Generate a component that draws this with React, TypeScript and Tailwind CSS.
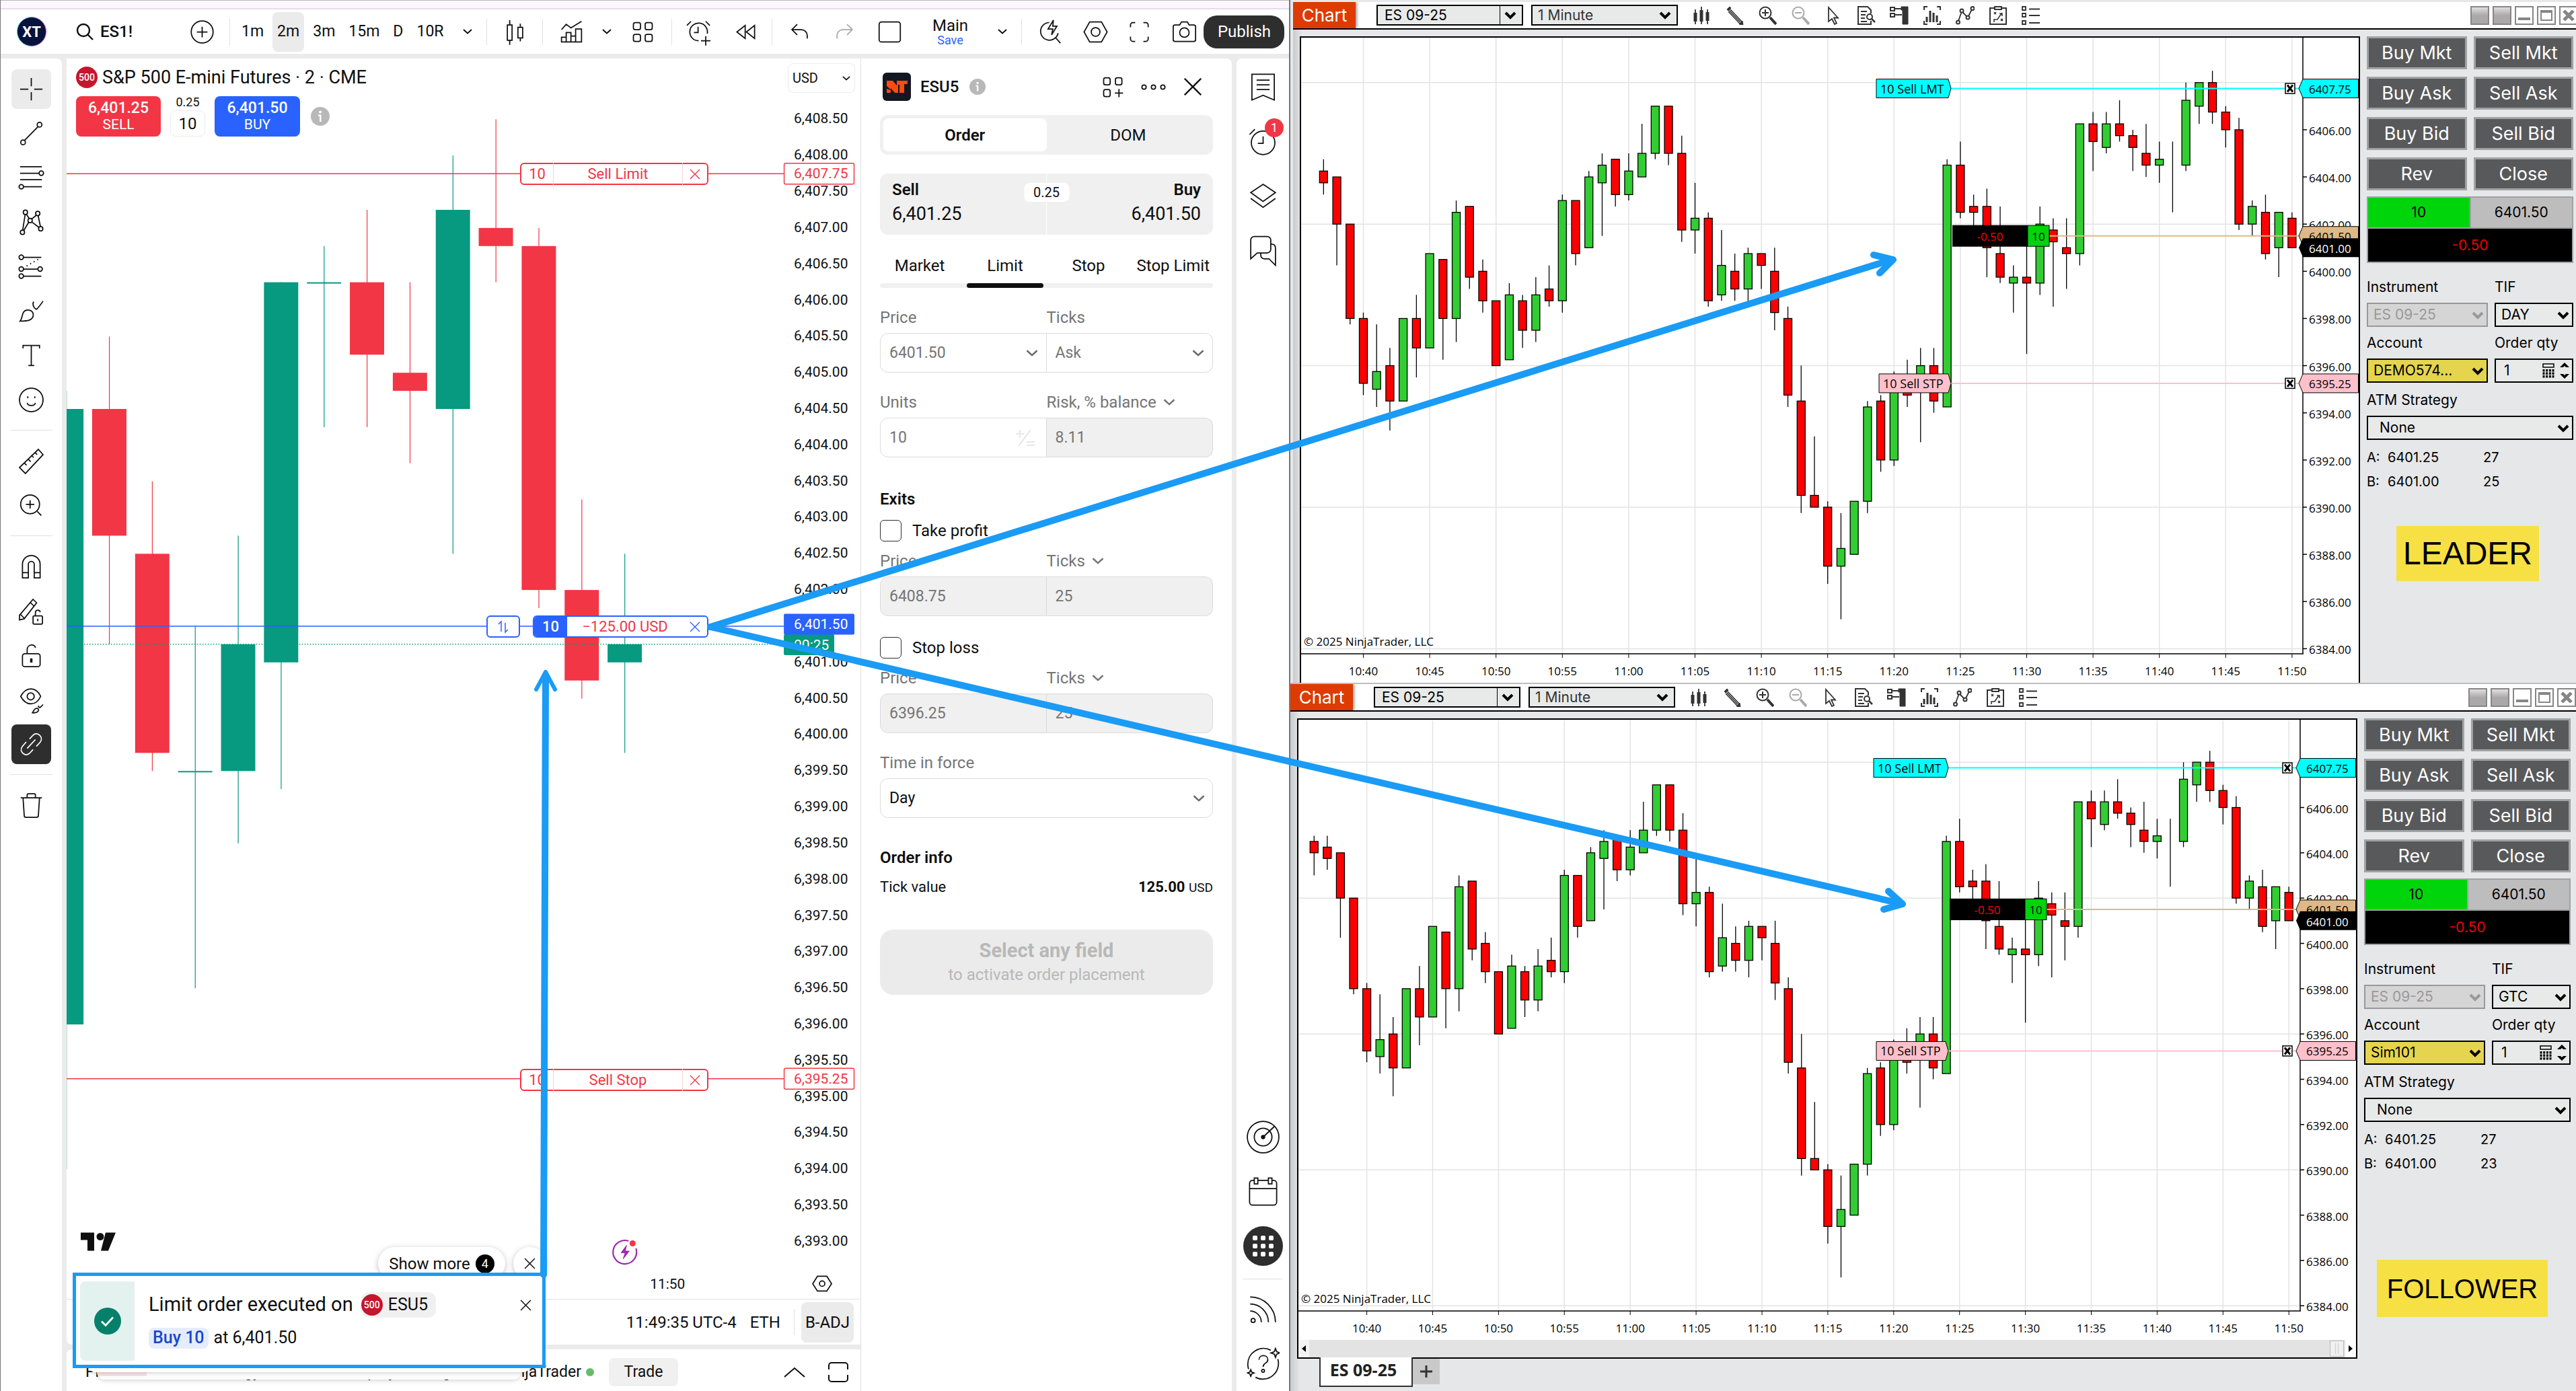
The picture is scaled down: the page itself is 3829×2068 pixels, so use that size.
import React, { PropsWithChildren, ReactNode } from "react";

/* ---------- data ---------- */

// [open, close, high, low] of the 2 minute chart
const TV_CANDLES = [
  [6396, 6404.5, 6404.75, 6394],
  [6404.5, 6402.75, 6405.5, 6401.25],
  [6402.5, 6399.75, 6403.5, 6399.5],
  [6399.5, 6399.5, 6401.5, 6396.5],
  [6399.5, 6401.25, 6402.75, 6398.5],
  [6401, 6406.25, 6406.25, 6399.25],
  [6406.25, 6406.25, 6406.75, 6404.25],
  [6406.25, 6405.25, 6407.25, 6404.25],
  [6405, 6404.75, 6406.25, 6403.75],
  [6404.5, 6407.25, 6408, 6402.5],
  [6407, 6406.75, 6408.5, 6406.25],
  [6406.75, 6402, 6407, 6401.75],
  [6402, 6400.75, 6403.25, 6400.5],
  [6401, 6401.25, 6402.5, 6399.75],
];

// [open, close, high, low] in ticks from 6400, one minute each from 10:36
const NT_CANDLES = [
  [18, 16, 19, 12], [17, 15, 19, 13], [16, 8, 16, 1], [8, -8, 8, -9],
  [-8, -19, -7, -21], [-20, -17, -9, -23], [-16, -22, -13, -27], [-22, -8, -8, -22],
  [-8, -13, -4, -18], [-13, 3, 3, -13], [2, -8, 2, -15], [-8, 10, 12, -12],
  [11, -1, 11, -3], [0, -5, 2, -7], [-5, -16, -5, -16], [-15, -4, -2, -15],
  [-5, -10, -4, -13], [-10, -4, -1, -12], [-3, -5, 1, -6], [-5, 12, 13, -7],
  [12, 3, 12, 1], [4, 16, 17, 4], [15, 18, 20, 6], [19, 13, 19, 11],
  [13, 17, 20, 12], [16, 20, 25, 16], [20, 28, 28, 19], [28, 20, 28, 18],
  [20, 7, 23, 5], [7, 9, 15, 3], [9, -5, 10, -6], [-4, 1, 7, -5],
  [0, -3, 3, -5], [-3, 3, 4, -6], [3, 1, 3, -3], [0, -7, 4, -10],
  [-8, -21, -6, -23], [-22, -38, -16, -41], [-38, -40, -28, -40], [-40, -50, -39, -53],
  [-50, -47, -41, -59], [-48, -39, -39, -48], [-39, -23, -22, -41], [-22, -32, -21, -34],
  [-32, -19, -17, -33], [-18, -21, -15, -23], [-19, -16, -13, -29], [-16, -22, -13, -24],
  [-23, 18, 19, -23], [18, 10, 22, 9], [11, 10, 13, 5], [11, 4, 14, -1],
  [3, -1, 11, -2], [-2, -1, 1, -7], [-1, -2, 5, -14], [-2, 8, 11, -4],
  [7, 5, 9, -6], [4, 3, 9, -3], [3, 25, 25, 1], [25, 22, 27, 17],
  [21, 25, 27, 20], [25, 23, 29, 22], [23, 21, 24, 17], [20, 18, 25, 16],
  [18, 19, 22, 15], [18, 18, 22, 10], [18, 29, 32, 17], [28, 32, 32, 25],
  [32, 27, 34, 25], [27, 24, 28, 21], [24, 8, 26, 7], [8, 11, 12, 6],
  [10, 3, 13, 2], [4, 10, 10, -1], [9, 4, 10, 4],
];

const TIMES = [
  "10:40", "10:45", "10:50", "10:55", "11:00", "11:05", "11:10", "11:15",
  "11:20", "11:25", "11:30", "11:35", "11:40", "11:45", "11:50",
];

/* ---------- shared bits ---------- */

interface IconProps extends PropsWithChildren {
  className?: string;
}

const Icon = ({ className = "size-[49px]", children }: IconProps) => (
  <svg viewBox="0 0 28 28" fill="none" stroke="currentColor" className={`shrink-0 ${className}`} aria-hidden="true">
    {children}
  </svg>
);

const Chevron = ({ className = "w-[14px] h-2" }: { className?: string }) => (
  <svg viewBox="0 0 14 8" fill="none" stroke="currentColor" strokeWidth="2" className={`shrink-0 ${className}`} aria-hidden="true">
    <path d="M1 1l6 5.5 6-5.5" />
  </svg>
);

const Cross = ({ className = "size-[17px]" }: { className?: string }) => (
  <svg viewBox="0 0 16 16" fill="none" stroke="currentColor" className={`shrink-0 ${className}`} aria-hidden="true">
    <path d="M1 1l14 14M15 1L1 15" strokeWidth="1.4" />
  </svg>
);

const InfoDot = ({ className }: { className: string }) => (
  <svg viewBox="0 0 28 28" className={`shrink-0 ${className}`} aria-hidden="true">
    <circle cx="14" cy="14" r="14" fill="#b8b8b8" />
    <path d="M11 11.5h4.5V22H13v-8.200h-2z" fill="#fff" />
    <circle cx="14" cy="7.5" r="1.9" fill="#fff" />
  </svg>
);

const SpBadge = ({ className }: { className: string }) => (
  <span className={`flex shrink-0 items-center justify-center rounded-full bg-[#c4162e] font-medium text-white ${className}`}>
    500
  </span>
);

/* ---------- left app: top toolbar ---------- */

const Divider = ({ className = "" }: { className?: string }) => (
  <span className={`h-[39px] w-px shrink-0 bg-[#e0e0e0] ${className}`} />
);

interface ToolProps extends PropsWithChildren {
  label: string;
  className?: string;
}

const Tool = ({ label, className = "", children }: ToolProps) => (
  <button aria-label={label} className={`flex shrink-0 items-center justify-center ${className}`}>
    {children}
  </button>
);

const TopToolbar = () => (
  <div className="flex h-[66px] items-center bg-white text-2xl">
    <svg viewBox="0 0 44 44" className="ml-6 size-11 shrink-0" aria-hidden="true">
      <defs>
        <linearGradient id="ring" x1="0" x2="1">
          <stop offset="0" stopColor="#35d6d0" />
          <stop offset="1" stopColor="#c04be0" />
        </linearGradient>
      </defs>
      <circle cx="22" cy="22" r="21.5" fill="#07133a" stroke="url(#ring)" />
      <text x="22" y="30" textAnchor="middle" fontSize="22" fontWeight="700" fill="#fff">XT</text>
    </svg>
    <button className="flex w-[202px] shrink-0 items-center gap-[10px] pl-11 font-medium">
      <svg viewBox="0 0 26 26" fill="none" stroke="currentColor" strokeWidth="2.4" className="size-[26px]" aria-hidden="true">
        <circle cx="11" cy="11" r="9" />
        <path d="M17.5 17.5L25 25" />
      </svg>
      ES1!
    </button>
    <Tool label="Compare" className="w-[58px]">
      <Icon><circle cx="14" cy="14" r="9.3" /><path d="M14 9.5v9M9.5 14h9" /></Icon>
    </Tool>
    <Divider className="ml-3" />
    <div className="ml-[10px] flex gap-[6px] text-[23px]">
      {["1m", "2m", "3m", "15m", "D", "10R"].map((item) => (
        <button
          key={item}
          className={item === "2m" ? "h-[59px] rounded-lg bg-[#ebebeb] px-[7px]" : "h-[59px] px-[7px]"}
        >
          {item}
        </button>
      ))}
    </div>
    <Tool label="Intervals" className="ml-3 w-[33px]"><Chevron /></Tool>
    <Divider className="ml-3" />
    <Tool label="Bar style" className="w-[82px]">
      <Icon><path d="M7.5 8h4v13h-4zM9.5 4v4M9.5 21v4M16.5 10h4v9h-4zM18.5 7v3M18.5 19v3" /></Icon>
    </Tool>
    <Divider />
    <Tool label="Indicators" className="w-[84px]">
      <Icon><path d="M5.5 12l4-4.5 4 3L22.5 5M5.5 22.5v-4h4v-4h4v3h4v-6h5v11zM9.5 18v4.5M13.5 17v5.5M17.5 17v5.5" /></Icon>
    </Tool>
    <Tool label="Favorite indicators" className="w-[22px]"><Chevron /></Tool>
    <Tool label="Templates" className="w-[85px]">
      <Icon>
        <rect x="6" y="6" width="6" height="6" rx="1.5" /><rect x="16" y="6" width="6" height="6" rx="1.5" />
        <rect x="6" y="16" width="6" height="6" rx="1.5" /><rect x="16" y="16" width="6" height="6" rx="1.5" />
      </Icon>
    </Tool>
    <Divider />
    <Tool label="Create alert" className="w-[78px]">
      <Icon><path d="M14 21.5a7.5 7.5 0 1 1 7.3-6M13.5 9.5v5H10M4 8.5L7.5 5M20 5l3.5 3.5M20 17.5v8M16 21.5h8" /></Icon>
    </Tool>
    <Tool label="Replay" className="w-[62px]">
      <Icon><path d="M13.5 8.5v11L6.5 14zM21.5 8.5v11l-7-5.5z" /></Icon>
    </Tool>
    <Divider className="ml-2" />
    <Tool label="Undo" className="w-20">
      <Icon><path d="M7.5 12h8a5 5 0 0 1 5 5v2.5M12 7.5L7.5 12l4.5 4.5" /></Icon>
    </Tool>
    <Tool label="Redo" className="w-[54px] text-[#a8a8a8]">
      <Icon><path d="M20.5 12h-8a5 5 0 0 0-5 5v2.5M16 7.5l4.5 4.5-4.5 4.5" /></Icon>
    </Tool>
    <div className="ml-auto flex items-center pr-2">
      <Tool label="Layout" className="w-[81px]">
        <Icon><rect x="5" y="5.5" width="18" height="17" rx="2" /></Icon>
      </Tool>
      <button className="w-[98px] text-center leading-[26px]">
        <span className="block">Main</span>
        <span className="block text-lg leading-[18px] text-[#2962ff]">Save</span>
      </button>
      <Tool label="Manage layouts" className="w-[57px]"><Chevron /></Tool>
      <Divider />
      <Tool label="Quick search" className="w-[82px]">
        <Icon><path d="M13.5 6a7.5 7.5 0 1 0 7.5 9M19 19l4 4.5M17 4l-4.5 7.5h4l-1 5L20 9h-3.500z" /></Icon>
      </Tool>
      <Tool label="Settings" className="w-[54px]">
        <Icon><path d="M9 5.5h10l4.8 8.5-4.8 8.5H9L4.2 14z" /><circle cx="14" cy="14" r="3.7" /></Icon>
      </Tool>
      <Tool label="Fullscreen" className="w-[76px]">
        <Icon><path d="M6.5 10V8a2 2 0 0 1 2-2h2M17.5 6h2a2 2 0 0 1 2 2v2M21.5 18v2a2 2 0 0 1-2 2h-2M10.5 22h-2a2 2 0 0 1-2-2v-2" /></Icon>
      </Tool>
      <Tool label="Snapshot" className="w-[58px]">
        <Icon><path d="M4.5 9.5A1.5 1.5 0 0 1 6 8h4l1.5-2.5h5L18 8h4a1.5 1.5 0 0 1 1.5 1.5v11A1.5 1.5 0 0 1 22 22H6a1.5 1.5 0 0 1-1.5-1.5z" /><circle cx="14" cy="14.5" r="4" /></Icon>
      </Tool>
      <button className="h-[49px] w-[120px] rounded-[20px] bg-[#2e2e2e] text-white">Publish</button>
    </div>
  </div>
);

/* ---------- left app: drawing tools ---------- */

const DRAW_TOOLS: { label: string; icon: ReactNode; active?: string }[] = [
  { label: "Cross", active: "bg-[#ebebeb]", icon: <path d="M14 4.5v7M14 16.5v7M4.5 14h7M16.5 14h7" /> },
  { label: "Trend line", icon: <><circle cx="21" cy="6.5" r="2" /><circle cx="7" cy="21.5" r="2" /><path d="M19.7 8.2L8.3 19.8" /></> },
  { label: "Fib retracement", icon: <><path d="M4.5 4.5H23M4.5 10h16M4.5 15.5H23M7.5 21.5H23" /><circle cx="22.5" cy="10" r="1.9" /><circle cx="5.5" cy="21.5" r="1.9" /></> },
  { label: "Patterns", icon: <><circle cx="9" cy="5.5" r="1.8" /><circle cx="19.5" cy="6.5" r="1.8" /><circle cx="13" cy="12.5" r="1.8" /><circle cx="22" cy="19.5" r="1.8" /><circle cx="6.5" cy="22.5" r="1.8" /><path d="M8.8 7.3L6.7 20.7M9.8 7.2l2.5 3.7M18.3 8l-4 3.2M19.8 8.3l2 9.4M14.5 13.8l6 4.5M11.8 14L7.6 21" /></> },
  { label: "Prediction", icon: <><circle cx="5.5" cy="6" r="1.9" /><circle cx="5.5" cy="16" r="1.9" /><circle cx="5.5" cy="22" r="1.9" /><circle cx="21.5" cy="16" r="1.9" /><path d="M7.5 6h15M7.5 16h12M7.5 22h15" /><path d="M10 13.5L21 7" strokeDasharray="1 2.5" /></> },
  { label: "Brush", icon: <path d="M4.5 22.5c2.5-2.5 1-9.5 6.5-9.5 3 0 4.7 2 4.7 4 0 5-5 5.5-11.2 5.5zM16 6c-1.500 2.500.5 6 2.5 6.5C20.5 10.5 22 8.5 24 5.5" /> },
  { label: "Text", icon: <path d="M7 8V5.5h14V8M14 5.5v17M11.5 22.5h5" /> },
  { label: "Emoji", icon: <><circle cx="14" cy="14" r="10" /><path d="M10.5 16.5c.5 3 6.5 3 7 0M11 11v1.5M17 11v1.5" /></> },
];

const DRAW_TOOLS_2: typeof DRAW_TOOLS = [
  { label: "Measure", icon: <path d="M20 4l4 4.5L9 24.5l-5-5zM8 15.5l2 2M11 12l2.5 2.5M14 9l2 2M17 6.5l2 2" /> },
  { label: "Zoom in", icon: <><circle cx="13" cy="13" r="8" /><path d="M13 9.5v7M9.5 13h7M19 19l3.5 3.5" /></> },
];

const DRAW_TOOLS_3: typeof DRAW_TOOLS = [
  { label: "Magnet", icon: <path d="M6.5 23.5V12a7.5 7.5 0 0 1 15 0v11.5h-5V12a2.5 2.5 0 0 0-5 0v11.5zM6.5 19h5M16.5 19h5" /> },
  { label: "Lock drawing mode", icon: <><path d="M15.5 4l3 3L8 20.5l-4 1v-4zM13.5 7l3 3M5 17l3 3" /><rect x="15.5" y="18" width="8" height="7" rx="1" /><path d="M17.5 18v-2.5c0-3 4-3 4-.5M19.5 20.5v2" /></> },
  { label: "Lock all", icon: <><rect x="6.5" y="12.5" width="15" height="11" rx="2" /><path d="M10.5 12.5V9c0-5 7-5 7-1.5" /><path d="M14 16.5V20" strokeWidth="2" /></> },
  { label: "Hide drawings", icon: <><path d="M5 11c4.5-8.5 13-8.5 17 0-4 8.5-12.5 8.5-17 0z" /><circle cx="13.5" cy="11" r="3" /><path d="M15 25c1-1.5 1.5-4 4-3.8 2 .5 2 4-4 3.8zM20 19c0 1.5 1 1.5 1.5 1.5L24 18" /></> },
  { label: "Sync drawings", active: "bg-[#2e2e2e] text-white", icon: <path d="M12.5 9.5l3-3.2c3.5-3.5 9.5 1.5 6 6l-3.2 3.5M15.5 18.5l-3 3.2c-3.5 3.5-9.5-1.5-6-6L9.7 12M10.5 17.5l7-7.5" /> },
];

const ToolList = ({ items }: { items: typeof DRAW_TOOLS }) => (
  <>
    {items.map((tool) => (
      <div key={tool.label} className="flex h-[66px] items-center justify-center">
        <button
          aria-label={tool.label}
          className={`flex size-[59px] items-center justify-center rounded-lg ${tool.active ?? ""}`}
        >
          <Icon className="size-[49px]">{tool.icon}</Icon>
        </button>
      </div>
    ))}
  </>
);

const DrawingTools = () => (
  <nav className="w-[91px] shrink-0 rounded-tr-lg bg-white pt-3">
    <ToolList items={DRAW_TOOLS} />
    <hr className="mx-[14px] mt-3 border-[#e0e0e0]" />
    <div className="mt-3"><ToolList items={DRAW_TOOLS_2} /></div>
    <hr className="mx-[14px] mt-3 border-[#e0e0e0]" />
    <div className="mt-3"><ToolList items={DRAW_TOOLS_3} /></div>
    <hr className="mx-[14px] mt-3 border-[#e0e0e0]" />
    <div className="mt-3">
      <ToolList
        items={[{ label: "Remove", icon: <path d="M5 7.5h18M10.5 7.5V5a1 1 0 0 1 1-1h5a1 1 0 0 1 1 1v2.5M7 7.5l1 15A1.5 1.5 0 0 0 9.5 24h9a1.5 1.5 0 0 0 1.5-1.5l1-15" /> }]}
      />
    </div>
  </nav>
);

/* ---------- left app: chart ---------- */

const tvY = (price: number) => 90.5 + (6408.5 - price) * 107.74;
const tvX = (index: number) => 63.5 + (index - 1) * 63.9;
const TV_LABELS = Array.from({ length: 32 }, (_, i) => 6408.5 - i * 0.5);
const fmt = (price: number) => price.toLocaleString("en-US", { minimumFractionDigits: 2 });

const TvPlot = () => (
  <svg viewBox="0 0 1181 1846" className="block h-auto w-full">
    {TV_CANDLES.map(([open, close, high, low], i) => {
      const color = close >= open ? "#089981" : "#f23645";
      const top = tvY(Math.max(open, close));
      const height = Math.max(2, Math.abs(open - close) * 107.74);
      return (
        <g key={i} fill={color}>
          <rect x={tvX(i) - 0.5} y={tvY(high)} width="1.2" height={(high - low) * 107.74} />
          <rect x={tvX(i) - 25.5} y={top} width="51" height={height} />
        </g>
      );
    })}
    <path d={`M26 ${tvY(6401.25)}H1067`} stroke="#089981" strokeWidth="1.5" strokeDasharray="1.5 2.5" />
    <path d={`M0 ${tvY(6401.5)}H1067`} stroke="#2962ff" strokeWidth="1.5" />
    <path d={`M0 ${tvY(6407.75)}H1067M0 ${tvY(6395.25)}H1067`} stroke="#f23645" strokeWidth="1.5" />
    <g fontSize="21" fill="#0f0f0f">
      {TV_LABELS.map((price) => (
        <text key={price} x="1082" y={tvY(price) + 6}>{fmt(price)}</text>
      ))}
      <text x="894" y="1831" textAnchor="middle">11:50</text>
    </g>
    {[6407.75, 6395.25].map((price) => (
      <g key={price} fontSize="21">
        <rect x="1067.5" y={tvY(price) - 15.5} width="104" height="31" rx="2" fill="#fff" stroke="#f23645" strokeWidth="1.5" />
        <text x="1082" y={tvY(price) + 7} fill="#f23645">{fmt(price)}</text>
      </g>
    ))}
    <rect x="1067" y={tvY(6401.5) + 12} width="75" height="31" rx="2" fill="#089981" />
    <text x="1082" y={tvY(6401.5) + 35} fontSize="21" fill="#fff">00:25</text>
    <rect x="1067" y={tvY(6401.5) - 18.5} width="105" height="31" rx="2" fill="#2962ff" />
    <text x="1082" y={tvY(6401.5) + 4} fontSize="21" fill="#fff">{fmt(6401.5)}</text>
    {/* TradingView mark */}
    <g fill="#0f0f0f">
      <path d="M21 1747h20v27H31v-16H21zM58 1747h15l-11 27H51z" />
      <circle cx="50" cy="1753" r="5.5" />
    </g>
    {/* event marker under the last bar */}
    <g fill="none" stroke="#9c27b0" strokeWidth="2.2">
      <path d="M836 1759.5a17.5 17.5 0 1 0 11 11" />
      <path d="M833 1766l-8 11h6l-3 9 9-11.5h-6z" fill="#9c27b0" strokeWidth="1" />
      <circle cx="842" cy="1763" r="4.5" fill="#f23645" stroke="none" />
    </g>
    <g fill="none" stroke="#0f0f0f" strokeWidth="1.7">
      <path d="M1117 1812h14l7 11-7 11h-14l-7-11z" />
      <circle cx="1124" cy="1823" r="4" />
    </g>
  </svg>
);

const OrderTag = ({ name, className }: { name: string; className: string }) => (
  <div className={`absolute left-[674px] flex h-[33px] w-[280px] items-center rounded-md border-2 border-[#f23645] bg-white text-[22px] text-[#f23645] ${className}`}>
    <span className="w-12 border-r border-[#fbd0d4] text-center">10</span>
    <span className="flex-1 border-r border-[#fbd0d4] text-center">{name}</span>
    <button aria-label={`Cancel ${name}`} className="flex w-9 justify-center"><Cross className="size-4" /></button>
  </div>
);

const SymbolHeader = () => (
  <div className="absolute top-3 left-[14px]">
    <div className="flex h-8 items-center gap-[7px]">
      <SpBadge className="size-8 text-sm" />
      <h1 className="text-[27px]">S&P 500 E-mini Futures · 2 · CME</h1>
    </div>
    <div className="mt-3 flex h-[60px] items-center text-[21px] leading-6">
      <button className="h-full w-[126px] rounded-lg bg-[#f23645] text-white">
        <span className="block text-[23px] font-medium">6,401.25</span>
        <span className="block">SELL</span>
      </button>
      <div className="mx-[14px] flex h-full w-[52px] flex-col items-center justify-between">
        <span className="text-lg leading-[18px]">0.25</span>
        <input aria-label="Quantity" defaultValue="10" className="h-[39px] w-full rounded-lg border border-[#ebebeb] text-center text-2xl" />
      </div>
      <button className="h-full w-[127px] rounded-lg bg-[#2962ff] text-white">
        <span className="block text-[23px] font-medium">6,401.50</span>
        <span className="block">BUY</span>
      </button>
      <InfoDot className="ml-4 size-7" />
    </div>
  </div>
);

const Toast = () => (
  <div className="absolute bottom-[34px] left-[9px] w-[703px]">
    <div className="absolute -top-[38px] right-[60px] flex h-[49px] w-[189px] items-center justify-center gap-2 rounded-full bg-white text-2xl shadow-[0_2px_8px_rgba(0,0,0,0.25)]">
      <button>Show more</button>
      <span className="flex size-7 items-center justify-center rounded-full bg-black text-lg text-white">4</span>
    </div>
    <button aria-label="Close all" className="absolute -top-[38px] -right-[1px] flex size-[49px] items-center justify-center rounded-full bg-white shadow-[0_2px_8px_rgba(0,0,0,0.25)]">
      <Cross />
    </button>
    <div className="absolute inset-x-[36px] -bottom-[17px] h-10 overflow-hidden rounded-xl bg-white shadow-md">
      <div className="mt-[27px] h-2 w-[74px] bg-[#fbe3e5]" />
    </div>
    <div className="absolute inset-x-[22px] -bottom-[6px] h-10 rounded-xl bg-white shadow-md" />
    <div className="relative border-[5px] border-[#1a9bf5] bg-white p-[6px] pt-2">
      <div className="flex h-[118px]">
        <div className="flex w-[81px] items-center justify-center rounded-l-lg bg-[#e4f2ef]">
          <svg viewBox="0 0 40 40" className="size-10" aria-hidden="true">
            <circle cx="20" cy="20" r="20" fill="#06806b" />
            <path d="M11 20.5l6 6 11-12" fill="none" stroke="#fff" strokeWidth="2.8" />
          </svg>
        </div>
        <div className="ml-[21px] flex flex-1 flex-col pt-4">
          <div className="flex h-[38px] items-center gap-3 text-[29px]">
            Limit order executed on
            <span className="flex h-[38px] items-center gap-2 rounded-xl bg-[#f0f0f0] pr-3 text-[25px]">
              <SpBadge className="size-8 text-sm" />
              ESU5
            </span>
            <button aria-label="Dismiss" className="mr-[10px] ml-auto"><Cross /></button>
          </div>
          <div className="mt-[14px] flex h-8 items-center gap-2 text-[25px]">
            <span className="flex h-[31px] items-center rounded-lg bg-[#e4ecfd] px-[6px] font-medium text-[#1848cc]">Buy 10</span>
            at 6,401.50
          </div>
        </div>
      </div>
    </div>
  </div>
);

const ChartColumn = () => (
  <section className="relative flex min-w-0 flex-1 flex-col text-[#0f0f0f]">
    <div className="rounded-bl-lg bg-white">
      <div className="relative">
        <TvPlot />
        <SymbolHeader />
        <select aria-label="Currency" className="absolute top-[7px] right-2 h-[44px] w-[100px] appearance-none rounded-lg border border-[#ebebeb] bg-white pl-[6px] text-xl">
          <option>USD</option>
        </select>
        <Chevron className="pointer-events-none absolute top-[26px] right-[15px] h-[7px] w-3" />
        <OrderTag name="Sell Limit" className="top-[155px]" />
        <OrderTag name="Sell Stop" className="top-[1502px]" />
        <button aria-label="Reverse position" className="absolute top-[828px] left-[624px] flex h-[33px] w-[50px] items-center justify-center rounded-md border-2 border-[#2962ff] bg-white text-[#2962ff]">
          <svg viewBox="0 0 20 20" fill="none" stroke="currentColor" strokeWidth="1.5" className="size-5" aria-hidden="true">
            <path d="M3 6l4-4v15M17 14l-4 4V4" />
          </svg>
        </button>
        <div className="absolute top-[828px] left-[693px] flex h-[33px] w-[261px] items-center overflow-hidden rounded-md border-2 border-[#2962ff] bg-white text-[22px]">
          <span className="flex h-full w-[49px] items-center justify-center bg-[#2962ff] font-medium text-white">10</span>
          <span className="flex-1 text-center whitespace-nowrap text-[#f23645]">−125.00 USD</span>
          <button aria-label="Close position" className="flex w-9 justify-center text-[#2962ff]"><Cross className="size-4" /></button>
        </div>
      </div>
      <div className="flex h-[68px] items-center justify-end gap-5 border-t border-[#e0e0e0] pr-[10px] text-2xl">
        <button>11:49:35 UTC-4</button>
        <button>ETH</button>
        <div className="flex items-center gap-[10px]">
          <Divider />
          <button className="h-[60px] w-[78px] rounded-lg bg-[#ebebeb]">B-ADJ</button>
        </div>
      </div>
    </div>
    <div className="mt-[7px] flex h-[60px] flex-1 items-center rounded-tl-lg bg-white pt-[6px] pr-[18px] pl-7 text-[23px]">
      <button className="w-[175px] text-left">Pine Editor</button>
      <button className="w-[218px] text-left">Strategy Tester</button>
      <button className="flex-1 text-left">Replay Trading</button>
      <button className="flex items-center gap-[7px]">
        NinjaTrader
        <span className="size-3 rounded-full bg-[#66bb6a]" />
      </button>
      <button className="ml-[22px] h-[42px] w-[103px] rounded-lg bg-[#f0f0f0]">Trade</button>
      <Tool label="Open panel" className="ml-[157px]">
        <svg viewBox="0 0 32 16" fill="none" stroke="currentColor" strokeWidth="2" className="h-4 w-8" aria-hidden="true">
          <path d="M1 15L16 2l15 13" />
        </svg>
      </Tool>
      <Tool label="Maximize panel" className="ml-[34px]">
        <svg viewBox="0 0 30 30" fill="none" stroke="currentColor" strokeWidth="2" className="size-[30px]" aria-hidden="true">
          <path d="M1 11V5a4 4 0 0 1 4-4h20a4 4 0 0 1 4 4v6M1 19v6a4 4 0 0 0 4 4h20a4 4 0 0 0 4-4v-6" />
        </svg>
      </Tool>
    </div>
    <Toast />
  </section>
);

/* ---------- left app: order ticket ---------- */

interface FieldProps {
  id: string;
  label: string;
  value: string;
  muted?: boolean;
  arrow?: boolean;
  labelArrow?: boolean;
  calc?: boolean;
  side: "left" | "right";
}

const Field = ({ id, label, value, muted, arrow, labelArrow, calc, side }: FieldProps) => (
  <div className="flex-1">
    <label htmlFor={id} className="flex h-7 items-center gap-[10px] text-[#757575]">
      {label}
      {labelArrow && <Chevron className="h-[10px] w-[18px]" />}
    </label>
    <div
      className={`mt-[9px] flex h-[59px] items-center border-[#dbdbdb] pr-3 ${
        side === "left" ? "rounded-l-xl border" : "rounded-r-xl border border-l-0"
      } ${muted ? "bg-[#f0f0f0]" : "bg-white"}`}
    >
      <input id={id} defaultValue={value} className="w-0 flex-1 pl-[13px] text-[23px] text-[#757575] outline-none" />
      {arrow && <Chevron className="h-[10px] w-[18px] text-[#6a6a6a]" />}
      {calc && (
        <svg viewBox="0 0 30 26" fill="none" stroke="#e6e6e6" strokeWidth="2" className="mr-1 h-[26px] w-[30px]" aria-hidden="true">
          <path d="M1 7h12M7 1v12M5 25L23 1M17 19h12M17 24h12" />
        </svg>
      )}
    </div>
  </div>
);

const CheckRow = ({ id, label }: { id: string; label: string }) => (
  <div className="flex h-8 items-center gap-4 text-[#0f0f0f]">
    <input id={id} type="checkbox" className="size-8 appearance-none rounded-md border border-[#2e2e2e] bg-white" />
    <label htmlFor={id}>{label}</label>
  </div>
);

const OrderTicket = () => (
  <section className="w-[552px] shrink-0 rounded-tr-lg border-l border-[#e0e0e0] bg-white px-7 pt-[21px] text-2xl leading-7 text-[#0f0f0f]">
    <header className="flex h-[42px] items-center">
      <svg viewBox="0 0 42 42" className="ml-1 size-[42px]" aria-hidden="true">
        <rect width="42" height="42" rx="6" fill="#131722" />
        <path d="M6 12h9l6 7v-7h16v5h-5v13h-7V18h-2v12h-5l-6-7v2l-6-5zM6 24l6 2v4H6z" fill="#ff4a10" />
      </svg>
      <h2 className="ml-[14px] font-medium">ESU5</h2>
      <InfoDot className="ml-4 size-6" />
      <button aria-label="Widgets" className="ml-auto">
        <Icon>
          <rect x="6" y="6" width="5.5" height="6" rx="1.5" /><rect x="16" y="6" width="5.5" height="6" rx="1.5" />
          <rect x="6" y="16" width="5.5" height="6" rx="1.5" /><path d="M19 15.5v7M15.5 19h7" />
        </Icon>
      </button>
      <button aria-label="More" className="ml-[11px]">
        <Icon><circle cx="6" cy="14" r="1.8" /><circle cx="14" cy="14" r="1.8" /><circle cx="22" cy="14" r="1.8" /></Icon>
      </button>
      <button aria-label="Close panel" className="mr-4 ml-5"><Cross className="size-7" /></button>
    </header>

    <div className="mt-[21px] flex h-[59px] rounded-xl bg-[#f0f0f0] p-[5px]">
      <button className="flex-1 rounded-lg bg-white font-semibold">Order</button>
      <button className="flex-1">DOM</button>
    </div>

    <div className="relative mt-7 flex h-[91px] rounded-xl bg-[#f0f0f0]">
      <button className="flex-1 border-r border-white pb-2 pl-[18px] text-left">
        <span className="block font-semibold">Sell</span>
        <span className="mt-2 block text-[27px]">6,401.25</span>
      </button>
      <button className="flex-1 pr-[18px] pb-2 text-right">
        <span className="block font-semibold">Buy</span>
        <span className="mt-2 block text-[27px]">6,401.50</span>
      </button>
      <span className="absolute top-[14px] left-1/2 -translate-x-1/2 rounded-lg bg-white px-[14px] text-xl leading-7">0.25</span>
    </div>

    <div className="mt-6 grid h-11 grid-cols-[118px_136px_112px_124px] items-center text-center">
      <button>Market</button>
      <button>Limit</button>
      <button>Stop</button>
      <button className="text-right whitespace-nowrap">Stop Limit</button>
    </div>
    <div className="mt-1 h-[7px] rounded-full bg-[#f0f0f0]">
      <div className="ml-[129px] h-full w-[114px] rounded-full bg-[#0f0f0f]" />
    </div>

    <div className="mt-[30px] flex">
      <Field id="price" label="Price" value="6401.50" side="left" arrow />
      <Field id="ticks" label="Ticks" value="Ask" side="right" arrow />
    </div>
    <div className="mt-[30px] flex">
      <Field id="units" label="Units" value="10" side="left" calc />
      <Field id="risk" label="Risk, % balance" value="8.11" side="right" muted labelArrow />
    </div>

    <h3 className="mt-12 mb-[17px] font-semibold">Exits</h3>
    <CheckRow id="tp" label="Take profit" />
    <div className="mt-[15px] mb-[31px] flex">
      <Field id="tp-price" label="Price" value="6408.75" side="left" muted />
      <Field id="tp-ticks" label="Ticks" value="25" side="right" muted labelArrow />
    </div>
    <CheckRow id="sl" label="Stop loss" />
    <div className="mt-[15px] flex">
      <Field id="sl-price" label="Price" value="6396.25" side="left" muted />
      <Field id="sl-ticks" label="Ticks" value="25" side="right" muted labelArrow />
    </div>

    <label htmlFor="tif" className="mt-[30px] block text-[#757575]">Time in force</label>
    <div className="relative mt-[9px]">
      <select id="tif" className="h-[59px] w-full appearance-none rounded-xl border border-[#dbdbdb] bg-white pl-[13px] text-[23px]">
        <option>Day</option>
      </select>
      <Chevron className="pointer-events-none absolute top-[25px] right-3 h-[10px] w-[18px] text-[#6a6a6a]" />
    </div>

    <h3 className="mt-[45px] font-semibold">Order info</h3>
    <div className="mt-4 flex justify-between text-[22px]">
      <span>Tick value</span>
      <span><b className="font-bold">125.00</b> <span className="text-[19px]">USD</span></span>
    </div>
    <button disabled className="mt-12 h-[97px] w-full rounded-[20px] bg-[#ebebeb] text-[#b8b8b8]">
      <span className="block text-[29px] leading-9 font-bold">Select any field</span>
      <span className="block text-2xl leading-9">to activate order placement</span>
    </button>
  </section>
);

/* ---------- left app: right rail ---------- */

const RailButton = ({ label, children }: PropsWithChildren<{ label: string }>) => (
  <button aria-label={label} className="relative flex h-[81px] w-full items-center justify-center">
    {children}
  </button>
);

const RightRail = () => (
  <nav className="ml-[7px] flex w-[78px] shrink-0 flex-col rounded-tl-lg bg-white pt-[2px]">
    <RailButton label="Watchlist">
      <Icon><path d="M4.5 3h19v22L14 21l-9.5 4zM8.5 8h11M8.5 12h11M8.5 16h11" /></Icon>
    </RailButton>
    <RailButton label="Alerts">
      <Icon><circle cx="14" cy="15" r="10" /><path d="M14 9.5v6H9.5M2.5 8L7 3.5" /></Icon>
      <span className="absolute top-[6px] right-2 flex size-7 items-center justify-center rounded-full bg-[#f23645] text-lg text-white">1</span>
    </RailButton>
    <RailButton label="Object tree">
      <Icon><path d="M14 4l10.5 7L14 18.5 3.5 11zM3.5 16L14 23.5 24.5 16" /></Icon>
    </RailButton>
    <RailButton label="Chats">
      <Icon><path d="M3.5 21V5a3 3 0 0 1 3-3h11a3 3 0 0 1 3 3v8a3 3 0 0 1-3 3H9zM21 8.5c2.5 0 3.5 1.5 3.5 3.5v14.5L19 21h-4a3 3 0 0 1-3-3v-1.5" /></Icon>
    </RailButton>
    <div className="mt-auto">
      <RailButton label="Screeners">
        <Icon><circle cx="14" cy="14" r="13.4" /><circle cx="14" cy="14" r="7.5" /><circle cx="14" cy="14" r="1.3" fill="currentColor" /><path d="M14 14l9.5-9" /></Icon>
      </RailButton>
      <RailButton label="Calendars">
        <Icon><path d="M5 4.5h18A2.5 2.5 0 0 1 25.5 7v16a2.5 2.5 0 0 1-2.5 2.5H5A2.5 2.5 0 0 1 2.5 23V7A2.5 2.5 0 0 1 5 4.5zM2.5 11.5h23" /><path d="M6.5 2.5h3v5h-3zM18.5 2.5h3v5h-3z" fill="#fff" /></Icon>
      </RailButton>
      <RailButton label="More products">
        <span className="flex size-[59px] items-center justify-center rounded-full bg-[#2e2e2e]">
          <span className="grid grid-cols-3 gap-[5px]">
            {Array.from({ length: 9 }, (_, i) => <span key={i} className="size-[7px] rounded-xs bg-white" />)}
          </span>
        </span>
      </RailButton>
      <hr className="mx-[10px] mt-2 mb-1 border-[#e0e0e0]" />
      <RailButton label="Streams">
        <Icon><circle cx="5.5" cy="23.5" r="1.7" /><path d="M3 3.5A21.5 21.5 0 0 1 24.5 25M3 9.5A15.5 15.5 0 0 1 18.5 25M3 15.5A9.5 9.5 0 0 1 12.5 25" /></Icon>
      </RailButton>
      <RailButton label="Help">
        <Icon>
          <path d="M20.5 2.5A13.3 13.3 0 0 0 1 14.5c0 1.5.3 3 .7 4M26.5 10a13.3 13.3 0 0 1-19 15.5" />
          <path d="M10.5 10.5c0-4.5 7.5-4.5 7.5 0 0 3.5-4 2.5-4 6" /><circle cx="14" cy="20" r="1.2" />
          <path d="M24.5 1l1 2.8 2.8 1-2.8 1-1 2.8-1-2.8-2.8-1 2.8-1zM3.5 19l.8 2 2 .8-2 .8-.8 2-.8-2-2-.8 2-.8z" />
        </Icon>
      </RailButton>
    </div>
  </nav>
);

const TradingView = () => (
  <main className="flex min-w-0 flex-col border-r-2 border-l border-[#777] bg-[#ebebeb] font-['Roboto','Liberation_Sans',sans-serif] text-[#0f0f0f]">
    <div className="h-[14px] border-t border-b-2 border-t-[#bbb] border-b-[#e4dee8] bg-[#fdf6ff]" />
    <TopToolbar />
    <div className="mt-[7px] flex flex-1">
      <DrawingTools />
      <div className="ml-[7px] flex min-w-0 flex-1">
        <ChartColumn />
        <OrderTicket />
      </div>
      <RightRail />
    </div>
  </main>
);

/* ---------- right side: NinjaTrader windows ---------- */

interface NtPlotProps {
  height: number;
  firstX: number;
  step: number;
  baseY: number;
  perPoint: number;
  floor: number;
  skip: number;
}

const NtPlot = ({ height, firstX, step, baseY, perPoint, floor, skip }: NtPlotProps) => {
  const y = (price: number) => baseY + (6406 - price) * perPoint;
  const tick = (value: number) => y(6400 + value / 4);
  const limit = y(6407.75);
  const stop = y(6395.25);
  const entry = y(6401.5);
  const last = y(6401);

  return (
    <svg viewBox={`0 0 1572 ${height}`} className="block h-auto w-full bg-white font-['Open_Sans','Noto_Sans',sans-serif]">
      <g stroke="#e3e3e3" strokeWidth="1.5">
        {TIMES.map((time, i) => (
          <path key={time} d={`M${firstX + i * 5 * step} 0V${floor}`} />
        ))}
        {[6408, 6402, 6396, 6390, 6384].map((price) => (
          <path key={price} d={`M0 ${y(price)}H1489`} />
        ))}
      </g>
      {NT_CANDLES.slice(skip).map(([open, close, high, low], i) => {
        const x = firstX + (i + skip - 4) * step;
        const top = tick(Math.max(open, close));
        return (
          <g key={i} stroke="#000" strokeWidth="1.3">
            <path d={`M${x} ${tick(high)}V${tick(low)}`} />
            <rect
              x={x - 6}
              y={top}
              width="12"
              height={tick(Math.min(open, close)) - top}
              fill={close >= open ? "#32cd32" : "#f00"}
            />
          </g>
        );
      })}
      <path d={`M1489 0V${floor}M0 ${floor}H1490`} fill="none" stroke="#000" strokeWidth="1.5" />
      <g fontSize="17" fill="#000">
        {Array.from({ length: 12 }, (_, i) => 6406 - i * 2).map((price) => (
          <g key={price}>
            <path d={`M1489 ${y(price)}h6`} stroke="#000" strokeWidth="1.5" />
            <text x="1498" y={y(price) + 8}>{price.toFixed(2)}</text>
          </g>
        ))}
        {TIMES.map((time, i) => (
          <g key={time}>
            <path d={`M${firstX + i * 5 * step} ${floor}v6`} stroke="#000" />
            <text x={firstX + i * 5 * step} y={floor + 32} textAnchor="middle">{time}</text>
          </g>
        ))}
        <text x="4" y={floor - 12}>© 2025 NinjaTrader, LLC</text>
      </g>

      <g strokeWidth="2">
        <path d={`M966 ${limit}H1484`} stroke="#0ff" />
        <path d={`M966 ${stop}H1484`} stroke="#ffc0cb" />
        <path d={`M1112 ${entry}H1484`} stroke="#deb887" />
      </g>
      {[
        { at: limit, left: 855, fill: "#0ff", name: "10 Sell LMT", price: "6407.75" },
        { at: stop, left: 859, fill: "#ffc0cb", name: "10 Sell STP", price: "6395.25" },
      ].map((order) => (
        <g key={order.name} fontSize="17">
          <path d={`M${order.left} ${order.at - 14}H962l4 14-4 14H${order.left}z`} fill={order.fill} stroke="#000" />
          <text x={order.left + 6} y={order.at + 7} fontSize="18">{order.name}</text>
          <rect x="1463" y={order.at - 7.5} width="14" height="15" fill="#fff" stroke="#000" strokeWidth="1.5" />
          <path d={`M1466 ${order.at - 5}l8 10m0-10l-8 10`} stroke="#000" strokeWidth="3" />
          <path d={`M1483 ${order.at}l6-14h82.5v28H1489z`} fill={order.fill} stroke="#000" />
          <text x="1498" y={order.at + 7}>{order.price}</text>
        </g>
      ))}
      <g fontSize="17">
        <rect x="968" y={entry - 16} width="112" height="32" />
        <text x="1024" y={entry + 7} textAnchor="middle" fill="#f00">-0.50</text>
        <rect x="1080" y={entry - 15.5} width="32" height="31" fill="#00d50c" stroke="#000" />
        <text x="1096" y={entry + 7} textAnchor="middle">10</text>
        <path d={`M1483 ${entry}l6-14h82.5v28H1489z`} fill="#deb887" stroke="#000" />
        <text x="1498" y={entry + 7}>6401.50</text>
        <path d={`M1483 ${last}l6-14h83v28h-83z`} />
        <text x="1498" y={last + 8} fill="#fff">6401.00</text>
      </g>
    </svg>
  );
};

const Caret = ({ className = "" }: { className?: string }) => (
  <svg viewBox="0 0 18 12" fill="none" stroke="currentColor" strokeWidth="4" className={`pointer-events-none absolute h-3 w-[18px] ${className}`} aria-hidden="true">
    <path d="M2 2l7 7 7-7" />
  </svg>
);

const NT_TOOLS: { label: string; icon: ReactNode; dim?: boolean }[] = [
  { label: "Bars", icon: <><path d="M5 5v22M14 1v26M23 5v22" strokeWidth="1.8" /><path d="M5 10v13M14 6v17M23 9v13" strokeWidth="5" /></> },
  { label: "Drawing", icon: <><path d="M5 8L22 26M8 5l17 18M6.5 6.5L23 24" strokeWidth="1.6" /><path d="M3 5l4-4 2 2-4 4zM21 27l6 1-1-6z" fill="currentColor" /></> },
  { label: "Zoom in", icon: <><circle cx="11" cy="10" r="8.5" strokeWidth="2" /><path d="M11 5v10M6 10h10" strokeWidth="2" /><path d="M18 17l9 10" strokeWidth="4" /></> },
  { label: "Zoom out", dim: true, icon: <><circle cx="11" cy="10" r="8.5" strokeWidth="2" /><path d="M6 10h10" strokeWidth="2" /><path d="M18 17l9 10" strokeWidth="4" /></> },
  { label: "Cursor", icon: <path d="M7 2v21l5-4 4 8 3-1.5-4-8h6z" strokeWidth="1.8" /> },
  { label: "Data box", icon: <><path d="M22 27H2V1h14l5 5v5M21 22v5" strokeWidth="2" /><path d="M6 8h9M6 13h7M6 18h6M6 23h9" strokeWidth="1.8" /><circle cx="19" cy="16" r="4" strokeWidth="2" /><path d="M22 19l5 5" strokeWidth="2.5" /></> },
  { label: "Chart trader", icon: <><path d="M17 1h10v26h-8V6h-2z" fill="currentColor" /><path d="M1 2h6v5H1zM1 11h6v5H1zM8 4h10M8 13h10" strokeWidth="2" /></> },
  { label: "Strategies", icon: <><path d="M7 1H2v5M21 1h5v5M7 27H2v-5M21 27h5v-5" strokeWidth="2" /><path d="M6 16v8M11 7v17M16 10v14M21 14v10" strokeWidth="3" /></> },
  { label: "Indicators", icon: <><path d="M4 22L9 8l9 9L24 5" strokeWidth="1.8" /><circle cx="3.5" cy="24" r="2.5" fill="#fff" strokeWidth="2" /><circle cx="9" cy="7" r="2.5" fill="#fff" strokeWidth="2" /><circle cx="18" cy="17" r="2.5" fill="#fff" strokeWidth="2" /><circle cx="25" cy="3.5" r="2.5" fill="#fff" strokeWidth="2" /></> },
  { label: "Playbook", icon: <><path d="M9 3H2v24h24V3h-7M9 1h10v4H9z" strokeWidth="2" /><path d="M8 9l3 3m0-3l-3 3M18 19l3 3m0-3l-3 3M8 24v-4h5l6-9M16 11h4v4" strokeWidth="1.6" /></> },
  { label: "Properties", icon: <path d="M1 1h5v5H1zM1 11h5v5H1zM1 22h5v5H1zM11 4.5h16M11 14h16M11 25h16" strokeWidth="1.8" /> },
];

const NtCombo = ({ id, label, value, split }: { id: string; label: string; value: string; split?: boolean }) => (
  <div className="relative h-[31px] w-[218px] shrink-0">
    <select
      id={id}
      aria-label={label}
      className={`h-full w-full appearance-none border-2 border-black bg-[#e8eae9] text-[21px] leading-6 ${
        split ? "pl-[10px]" : "pl-2 text-[#333]"
      }`}
    >
      <option>{value}</option>
    </select>
    {split && <span className="absolute top-[2px] right-[34px] h-[27px] w-px bg-black" />}
    <Caret className="top-[10px] right-[10px]" />
  </div>
);

const WIN_BUTTON = "flex h-7 w-7 items-center justify-center border-2 border-[#868686]";

const NtTitleBar = ({ id, className }: { id: string; className: string }) => (
  <div className={`flex h-[41px] items-center overflow-hidden border-b-2 border-black bg-white ${className}`}>
    <span className="flex h-full w-[93px] shrink-0 items-center justify-center bg-[#dd3b00] text-[26px] text-white shadow-[2px_0_4px_#999]">
      Chart
    </span>
    <span className="w-[31px] shrink-0" />
    <NtCombo id={`${id}-symbol`} label="Instrument" value="ES 09-25" split />
    <span className="w-3 shrink-0" />
    <NtCombo id={`${id}-interval`} label="Interval" value="1 Minute" />
    <div className="ml-[10px] flex text-[#333]">
      {NT_TOOLS.map((tool) => (
        <button
          key={tool.label}
          aria-label={tool.label}
          className={tool.dim ? "flex w-[49px] justify-center text-[#aaa]" : "flex w-[49px] justify-center"}
        >
          <Icon className="size-7">{tool.icon}</Icon>
        </button>
      ))}
    </div>
    <div className="ml-auto flex shrink-0 gap-[5px] text-[#868686]">
      <button aria-label="Link instrument" className={`${WIN_BUTTON} bg-linear-to-b from-[#e0dfe0] to-[#aba8a9] to-50%`} />
      <button aria-label="Link interval" className={`${WIN_BUTTON} bg-linear-to-b from-[#e0dfe0] to-[#aba8a9] to-50%`} />
      <button aria-label="Minimize" className={`${WIN_BUTTON} bg-white`}><span className="mt-[10px] h-1 w-[18px] bg-[#868686]" /></button>
      <button aria-label="Maximize" className={`${WIN_BUTTON} bg-white`}><span className="h-4 w-[18px] border-2 border-t-4 border-[#868686]" /></button>
      <button aria-label="Close" className={`${WIN_BUTTON} bg-white`}>
        <svg viewBox="0 0 18 16" stroke="currentColor" strokeWidth="5" className="h-4 w-[18px]" aria-hidden="true"><path d="M2 1l14 14M16 1L2 15" /></svg>
      </button>
    </div>
  </div>
);

const ORDER_BUTTONS = ["Buy Mkt", "Sell Mkt", "Buy Ask", "Sell Ask", "Buy Bid", "Sell Bid", "Rev", "Close"];

interface SelectBoxProps {
  id: string;
  value: string;
  className?: string;
  disabled?: boolean;
}

const SelectBox = ({ id, value, className = "border-black bg-[#e8eae9] pl-2", disabled }: SelectBoxProps) => (
  <div className={`relative mt-[11px] h-9 ${disabled ? "text-[#999]" : ""}`}>
    <select id={id} disabled={disabled} className={`h-full w-full appearance-none border-2 opacity-100 ${className}`}>
      <option>{value}</option>
    </select>
    <Caret className="top-[13px] right-[6px]" />
  </div>
);

interface ChartTraderProps extends PropsWithChildren {
  id: string;
  tif: string;
  account: string;
  bidSize: string;
}

const ChartTrader = ({ id, tif, account, bidSize, children }: ChartTraderProps) => (
  <aside className="ml-[10px] w-[307px] shrink-0 text-[21px] leading-6">
    <div className="grid grid-cols-2 gap-x-[10px] gap-y-[11px] text-[27px] text-white">
      {ORDER_BUTTONS.map((name) => (
        <button key={name} className="h-[49px] border-[3px] border-[#a0a2a3] bg-[#58595b]">{name}</button>
      ))}
    </div>
    <div className="mt-[9px] border-2 border-[#a0a2a3] text-center">
      <div className="flex h-[46px] border-b-2 border-[#a0a2a3]">
        <span className="flex flex-1 items-center justify-center border-r-2 border-[#a0a2a3] bg-[#00d50c]">10</span>
        <span className="flex flex-1 items-center justify-center bg-[#bdbdbd]">6401.50</span>
      </div>
      <div className="flex h-[49px] items-center justify-center bg-black text-[#e00]">-0.50</div>
    </div>

    <div className="mt-6 grid grid-cols-[180px_117px] gap-x-[10px] gap-y-3">
      <div>
        <label htmlFor={`${id}-inst`} className="block">Instrument</label>
        <SelectBox id={`${id}-inst`} value="ES 09-25" disabled className="border-[#999] bg-[#d5d5d5] pl-2 text-[#999]" />
      </div>
      <div>
        <label htmlFor={`${id}-tif`} className="block">TIF</label>
        <SelectBox id={`${id}-tif`} value={tif} />
      </div>
      <div>
        <label htmlFor={`${id}-acct`} className="block">Account</label>
        <SelectBox id={`${id}-acct`} value={account} className="border-black bg-[#e5d44d] pl-2" />
      </div>
      <div>
        <label htmlFor={`${id}-qty`} className="block whitespace-nowrap">Order qty</label>
        <div className="mt-[11px] flex h-9 items-center border-2 border-black bg-[#e8eae9] pr-1">
          <input id={`${id}-qty`} defaultValue="1" className="w-0 flex-1 pl-3 outline-none" />
          <svg viewBox="0 0 18 22" className="h-[22px] w-[18px]" aria-hidden="true">
            <path d="M1 1h16v5H1z" fill="none" stroke="#000" strokeWidth="1.5" />
            <path d="M2 9v13M6.7 9v13M11.4 9v13M16 9v13" stroke="#000" strokeWidth="3" strokeDasharray="3.5 1" />
          </svg>
          <svg viewBox="0 0 14 26" className="ml-2 h-[26px] w-[14px]" aria-hidden="true"><path d="M0 8l7-7 7 7H9L7 6 5 8zM0 18l7 7 7-7H9l-2 2-2-2z" /></svg>
        </div>
      </div>
    </div>
    <label htmlFor={`${id}-atm`} className="mt-[14px] block">ATM Strategy</label>
    <SelectBox id={`${id}-atm`} value="None" className="border-black bg-[#e8eae9] pl-[17px]" />
    <dl className="mt-[14px] grid grid-cols-[31px_142px_1fr] gap-y-3 text-xl leading-6">
      <dt>A:</dt><dd>6401.25</dd><dd>27</dd>
      <dt>B:</dt><dd>6401.00</dd><dd>{bidSize}</dd>
    </dl>
    {children}
  </aside>
);

const NT_BODY = "flex bg-[linear-gradient(to_right,#cacbcd,#e6e7e9_14px)] pt-[10px] pl-[10px]";

const LeaderWindow = () => (
  <section className="ml-1">
    <NtTitleBar id="leader" className="-mr-[3px]" />
    <div className={`${NT_BODY} pr-1`}>
      <div className="min-w-0 flex-1 border-2 border-b-0 border-black">
        <NtPlot height={959} firstX={92.5} step={19.72} baseY={136.9} perPoint={35.07} floor={916} skip={1} />
      </div>
      <ChartTrader id="leader" tif="DAY" account="DEMO574..." bidSize="25">
        <p className="mt-[54px] ml-11 flex h-[82px] w-[212px] items-center justify-center bg-[#f7e043] font-['Liberation_Sans',sans-serif] text-5xl">LEADER</p>
      </ChartTrader>
    </div>
  </section>
);

const FollowerWindow = () => (
  <section className="flex flex-1 flex-col border-t-2 border-[#bdbdbd]">
    <NtTitleBar id="follower" className="" />
    <div className={`${NT_BODY} flex-1 pr-2`}>
      <div className="min-w-0 flex-1">
        <div className="border-2 border-black">
          <NtPlot height={922} firstX={101.6} step={19.58} baseY={130.5} perPoint={33.67} floor={879} skip={0} />
          <div className="flex h-[26px] items-center justify-between bg-[#e3e3e3]">
            <button aria-label="Scroll left" className="flex h-full w-4 items-center justify-center bg-[#f3f3f3]">
              <svg viewBox="0 0 6 10" className="h-[10px] w-[6px]" aria-hidden="true"><path d="M6 0v10L0 5z" /></svg>
            </button>
            <div className="ml-auto flex h-6 w-[21px] items-center justify-center border border-[#bbb] bg-[#f0f0f0]">
              <span className="h-4 w-[5px] border-x border-[#ccc]" />
            </div>
            <button aria-label="Scroll right" className="ml-[2px] flex h-full w-4 items-center justify-center bg-white">
              <svg viewBox="0 0 6 10" className="h-[10px] w-[6px]" aria-hidden="true"><path d="M0 0v10l6-5z" /></svg>
            </button>
          </div>
        </div>
        <div className="flex pl-[33px]">
          <button className="-mt-[2px] h-[44px] w-[139px] border-2 border-t-0 border-[#333] bg-white pr-2 pb-1 font-['Open_Sans',sans-serif] text-[25px] font-bold text-[#222]">ES 09-25</button>
          <button aria-label="Add tab" className="flex h-[38px] w-10 items-center justify-center bg-[#c9c9c9]">
            <svg viewBox="0 0 18 18" stroke="#333" strokeWidth="3" className="size-[18px]" aria-hidden="true"><path d="M9 0v18M0 9h18" /></svg>
          </button>
        </div>
      </div>
      <ChartTrader id="follower" tif="GTC" account="Sim101" bidSize="23">
        <p className="mt-[131px] ml-[19px] flex h-[85px] w-[254px] items-center justify-center bg-[#f7e043] font-['Liberation_Sans',sans-serif] text-[40px]">FOLLOWER</p>
      </ChartTrader>
    </div>
  </section>
);

/* ---------- arrows drawn over both apps ---------- */

const Arrows = () => (
  <svg viewBox="0 0 3829 2068" fill="none" stroke="#1a9bf5" strokeWidth="10" strokeLinecap="round" strokeLinejoin="round" className="pointer-events-none absolute top-0 left-0 h-auto w-full" aria-hidden="true">
    <path d="M1056 932L2812 386" />
    <path d="M2785 379L2814 386L2794 406" />
    <path d="M1056 932L2824 1343" />
    <path d="M2807 1325L2828 1344L2800 1352" />
    <path d="M808 1895L811 1005" />
    <path d="M797 1025L811 999L825 1025" strokeWidth="6" />
  </svg>
);

const App = () => {
  return (
    <div className="relative grid min-h-screen grid-cols-[1918fr_1911fr] overflow-hidden bg-white">
      <TradingView />
      <div className="flex min-w-0 flex-col bg-[#e6e7e9] pt-[3px] font-['Inter','Open_Sans',sans-serif] text-black">
        <LeaderWindow />
        <FollowerWindow />
      </div>
      <Arrows />
    </div>
  );
};

export default App;
